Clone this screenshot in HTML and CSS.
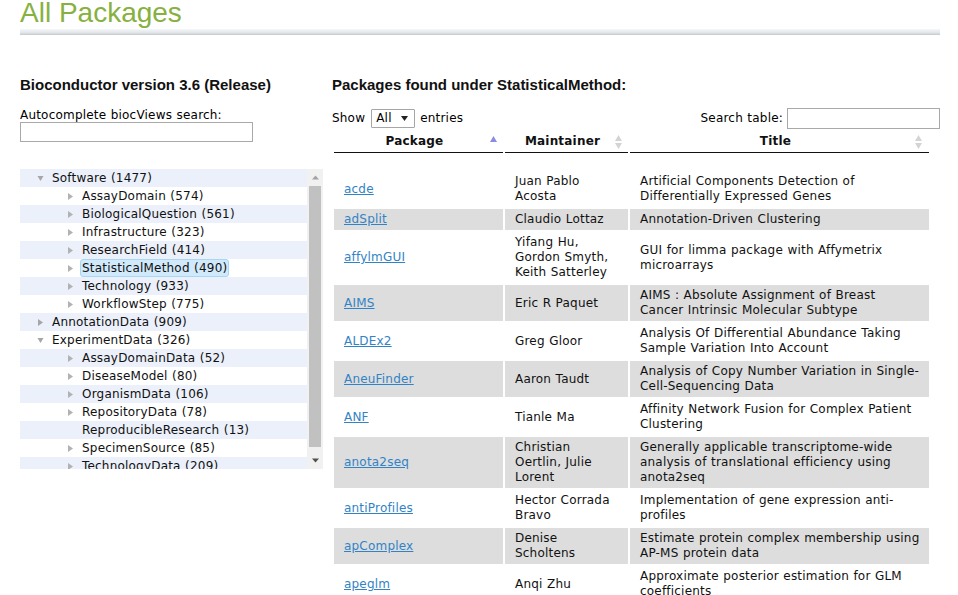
FILE: index.html
```html
<!DOCTYPE html>
<html lang="en">
<head>
<meta charset="utf-8">
<title>All Packages</title>
<link rel="stylesheet" href="styles.css">
</head>
<body>
<div class="page">
  <h1 class="page-title">All Packages</h1>
  <div class="title-bar"></div>

  <div class="columns">
    <aside class="left">
      <h2 class="section-heading">Bioconductor version 3.6 (Release)</h2>
      <label class="auto-label" for="auto">Autocomplete biocViews search:</label>
      <input id="auto" class="auto-input" type="text">

      <div class="tree-box">
        <ul class="tree">
          <li class="node l1"><svg class="tri" width="7" height="7" viewBox="0 0 7 7"><path d="M0.5 1 L6.5 1 L3.5 6 Z"/></svg><span>Software (1477)</span></li>
          <li class="node l2"><svg class="tri" width="7" height="7" viewBox="0 0 7 7"><path d="M1 0 L6 3.5 L1 7 Z"/></svg><span>AssayDomain (574)</span></li>
          <li class="node l2"><svg class="tri" width="7" height="7" viewBox="0 0 7 7"><path d="M1 0 L6 3.5 L1 7 Z"/></svg><span>BiologicalQuestion (561)</span></li>
          <li class="node l2"><svg class="tri" width="7" height="7" viewBox="0 0 7 7"><path d="M1 0 L6 3.5 L1 7 Z"/></svg><span>Infrastructure (323)</span></li>
          <li class="node l2"><svg class="tri" width="7" height="7" viewBox="0 0 7 7"><path d="M1 0 L6 3.5 L1 7 Z"/></svg><span>ResearchField (414)</span></li>
          <li class="node l2"><svg class="tri" width="7" height="7" viewBox="0 0 7 7"><path d="M1 0 L6 3.5 L1 7 Z"/></svg><span class="selected">StatisticalMethod (490)</span></li>
          <li class="node l2"><svg class="tri" width="7" height="7" viewBox="0 0 7 7"><path d="M1 0 L6 3.5 L1 7 Z"/></svg><span>Technology (933)</span></li>
          <li class="node l2"><svg class="tri" width="7" height="7" viewBox="0 0 7 7"><path d="M1 0 L6 3.5 L1 7 Z"/></svg><span>WorkflowStep (775)</span></li>
          <li class="node l1"><svg class="tri" width="7" height="7" viewBox="0 0 7 7"><path d="M1 0 L6 3.5 L1 7 Z"/></svg><span>AnnotationData (909)</span></li>
          <li class="node l1"><svg class="tri" width="7" height="7" viewBox="0 0 7 7"><path d="M0.5 1 L6.5 1 L3.5 6 Z"/></svg><span>ExperimentData (326)</span></li>
          <li class="node l2"><svg class="tri" width="7" height="7" viewBox="0 0 7 7"><path d="M1 0 L6 3.5 L1 7 Z"/></svg><span>AssayDomainData (52)</span></li>
          <li class="node l2"><svg class="tri" width="7" height="7" viewBox="0 0 7 7"><path d="M1 0 L6 3.5 L1 7 Z"/></svg><span>DiseaseModel (80)</span></li>
          <li class="node l2"><svg class="tri" width="7" height="7" viewBox="0 0 7 7"><path d="M1 0 L6 3.5 L1 7 Z"/></svg><span>OrganismData (106)</span></li>
          <li class="node l2"><svg class="tri" width="7" height="7" viewBox="0 0 7 7"><path d="M1 0 L6 3.5 L1 7 Z"/></svg><span>RepositoryData (78)</span></li>
          <li class="node l2"><span class="tri-blank"></span><span>ReproducibleResearch (13)</span></li>
          <li class="node l2"><svg class="tri" width="7" height="7" viewBox="0 0 7 7"><path d="M1 0 L6 3.5 L1 7 Z"/></svg><span>SpecimenSource (85)</span></li>
          <li class="node l2"><svg class="tri" width="7" height="7" viewBox="0 0 7 7"><path d="M1 0 L6 3.5 L1 7 Z"/></svg><span>TechnologyData (209)</span></li>
        </ul>
        <div class="scrollbar">
          <div class="sb-btn"><svg width="7" height="5" viewBox="0 0 7 5"><path d="M0 4.5 L3.5 0.5 L7 4.5 Z" fill="#a3a3a3"/></svg></div>
          <div class="sb-thumb"></div>
          <div class="sb-rest"></div>
          <div class="sb-btn"><svg width="7" height="5" viewBox="0 0 7 5"><path d="M0 0.5 L7 0.5 L3.5 4.5 Z" fill="#505050"/></svg></div>
        </div>
      </div>
    </aside>

    <main class="right">
      <h2 class="section-heading">Packages found under StatisticalMethod:</h2>
      <div class="controls">
        <div class="length">
          <span>Show</span>
          <span class="fake-select">All<svg width="7" height="5" viewBox="0 0 7 5"><path d="M0 0 L7 0 L3.5 5 Z" fill="#222"/></svg></span>
          <span>entries</span>
        </div>
        <div class="filter">
          <label for="search">Search table:</label>
          <input id="search" class="search-input" type="text">
        </div>
      </div>

      <table class="pkg-table">
        <thead>
          <tr>
            <th class="c-pkg">Package<svg class="sort" width="7" height="6" viewBox="0 0 7 6"><path d="M0 6 L3.5 0 L7 6 Z" fill="#8b8be3"/></svg></th>
            <th class="c-mnt">Maintainer<svg class="sort both" width="7" height="14" viewBox="0 0 7 14"><path d="M0 6 L3.5 0 L7 6 Z M0 8 L7 8 L3.5 14 Z" fill="#d4d4d4"/></svg></th>
            <th class="c-ttl">Title<svg class="sort both" width="7" height="14" viewBox="0 0 7 14"><path d="M0 6 L3.5 0 L7 6 Z M0 8 L7 8 L3.5 14 Z" fill="#d4d4d4"/></svg></th>
          </tr>
        </thead>
        <tbody>
          <tr class="spacer"><td colspan="3"></td></tr>
          <tr><td><a href="#">acde</a></td><td>Juan Pablo Acosta</td><td>Artificial Components Detection of Differentially Expressed Genes</td></tr>
          <tr class="alt"><td><a href="#">adSplit</a></td><td>Claudio Lottaz</td><td>Annotation-Driven Clustering</td></tr>
          <tr><td><a href="#">affylmGUI</a></td><td>Yifang Hu, Gordon Smyth, Keith Satterley</td><td>GUI for limma package with Affymetrix microarrays</td></tr>
          <tr class="alt"><td><a href="#">AIMS</a></td><td>Eric R Paquet</td><td>AIMS : Absolute Assignment of Breast Cancer Intrinsic Molecular Subtype</td></tr>
          <tr><td><a href="#">ALDEx2</a></td><td>Greg Gloor</td><td>Analysis Of Differential Abundance Taking Sample Variation Into Account</td></tr>
          <tr class="alt"><td><a href="#">AneuFinder</a></td><td>Aaron Taudt</td><td>Analysis of Copy Number Variation in Single-Cell-Sequencing Data</td></tr>
          <tr><td><a href="#">ANF</a></td><td>Tianle Ma</td><td>Affinity Network Fusion for Complex Patient Clustering</td></tr>
          <tr class="alt"><td><a href="#">anota2seq</a></td><td>Christian Oertlin, Julie Lorent</td><td>Generally applicable transcriptome-wide analysis of translational efficiency using anota2seq</td></tr>
          <tr><td><a href="#">antiProfiles</a></td><td>Hector Corrada Bravo</td><td>Implementation of gene expression anti-profiles</td></tr>
          <tr class="alt"><td><a href="#">apComplex</a></td><td>Denise Scholtens</td><td>Estimate protein complex membership using AP-MS protein data</td></tr>
          <tr><td><a href="#">apeglm</a></td><td>Anqi Zhu</td><td>Approximate posterior estimation for GLM coefficients</td></tr>
        </tbody>
      </table>
    </main>
  </div>
</div>
</body>
</html>
```
FILE: styles.css
```css
* { box-sizing: border-box; }

html, body {
  margin: 0;
  padding: 0;
  background: #fff;
  overflow: hidden;
}

body {
  font-family: "DejaVu Sans", Verdana, sans-serif;
  font-size: 12px;
  line-height: 15px;
  letter-spacing: 0.2px;
  word-spacing: 0.4px;
  color: #000;
}

.page {
  width: 920px;
  margin-left: 20px;
}

.page-title {
  margin: 0;
  font-family: "Liberation Sans", Arial, sans-serif;
  font-weight: normal;
  font-size: 28px;
  line-height: 26px;
  letter-spacing: 0;
  word-spacing: 0;
  color: #87b13f;
}

.title-bar {
  margin-top: 3px;
  height: 6px;
  background: linear-gradient(#f5f7f9, #e3e6e9 60%, #c6c8ca);
}

.columns {
  display: flex;
  gap: 9px;
  margin-top: 41px;
}

.left {
  width: 303px;
  flex: none;
}

.right {
  width: 608px;
  flex: none;
}

.section-heading {
  margin: 0;
  font-family: "Liberation Sans", Arial, sans-serif;
  font-weight: bold;
  font-size: 15px;
  line-height: 17px;
  letter-spacing: 0;
  word-spacing: 0;
  color: #111;
}

.auto-label {
  display: block;
  margin-top: 15px;
}

.auto-input {
  display: block;
  margin: -1px 0 0;
  width: 233px;
  height: 20px;
  border: 1px solid #a9a9a9;
  padding: 0 3px;
  font: inherit;
}

/* tree */
.tree-box {
  margin-top: 27px;
  height: 300px;
  display: flex;
}

.tree {
  list-style: none;
  margin: 0;
  padding: 0;
  width: 287px;
  height: 300px;
  overflow: hidden;
  flex: none;
}

.node {
  height: 18px;
  line-height: 18px;
  display: flex;
  align-items: center;
  white-space: nowrap;
  color: #111;
}

.node:nth-child(odd) { background: #ebf0fa; }

.node.l1 { padding-left: 17px; }
.node.l2 { padding-left: 47px; }

.tri {
  flex: none;
  margin-right: 8px;
  fill: #b2b2b2;
}

.node.l1 .tri { fill: #a6a6a6; }

.tri-blank {
  flex: none;
  width: 7px;
  margin-right: 8px;
}

.selected {
  margin-left: -2px;
  padding: 0 1px;
  line-height: 16px;
  border: 1px solid #a9d6f2;
  border-radius: 3px;
  background: #d0e9fb;
}

.scrollbar {
  width: 16px;
  height: 300px;
  flex: none;
  background: #f1f1f1;
  display: flex;
  flex-direction: column;
}

.sb-btn {
  height: 17px;
  display: flex;
  align-items: center;
  justify-content: center;
  flex: none;
}

.sb-thumb {
  height: 261px;
  margin: 0 2px;
  background: #c1c1c1;
  flex: none;
}

.sb-rest { flex: 1; }

/* controls */
.controls {
  margin-top: 15px;
  height: 21px;
  display: flex;
  align-items: center;
  justify-content: space-between;
}

.length {
  display: flex;
  align-items: center;
  gap: 5px;
}

.fake-select {
  display: inline-flex;
  align-items: center;
  justify-content: space-between;
  width: 44px;
  height: 19px;
  margin-left: 1px;
  padding: 0 6px 0 4px;
  border: 1px solid #a6a6a6;
  border-radius: 1px;
  background: #fff;
}

.filter {
  display: flex;
  align-items: center;
  gap: 4px;
}

.search-input {
  width: 153px;
  height: 21px;
  margin: 0;
  border: 1px solid #a9a9a9;
  padding: 0 3px;
  font: inherit;
}

/* table */
.pkg-table {
  width: 599px;
  table-layout: fixed;
  border-collapse: separate;
  border-spacing: 2px;
}

.pkg-table th {
  position: relative;
  padding: 3px 18px 3px 10px;
  border-bottom: 1px solid #111;
  font-weight: bold;
  text-align: center;
  color: #111;
}

.pkg-table th.c-pkg { width: 169px; }
.pkg-table th.c-mnt { width: 123px; }
.pkg-table th.c-ttl { width: 299px; }

.sort {
  position: absolute;
  top: 5px;
  right: 6px;
}

.sort.both { top: 4px; }
.c-ttl .sort { right: 7px; }

.pkg-table td {
  padding: 3px 10px;
  vertical-align: middle;
  text-align: left;
  color: #111;
}

.pkg-table td:last-child { padding-right: 8px; }

.pkg-table tr.spacer td {
  height: 14px;
  padding: 0;
}

.pkg-table tr.alt td { background: #dddddd; }

.pkg-table a {
  color: #3283c6;
  text-decoration: underline;
}
```
